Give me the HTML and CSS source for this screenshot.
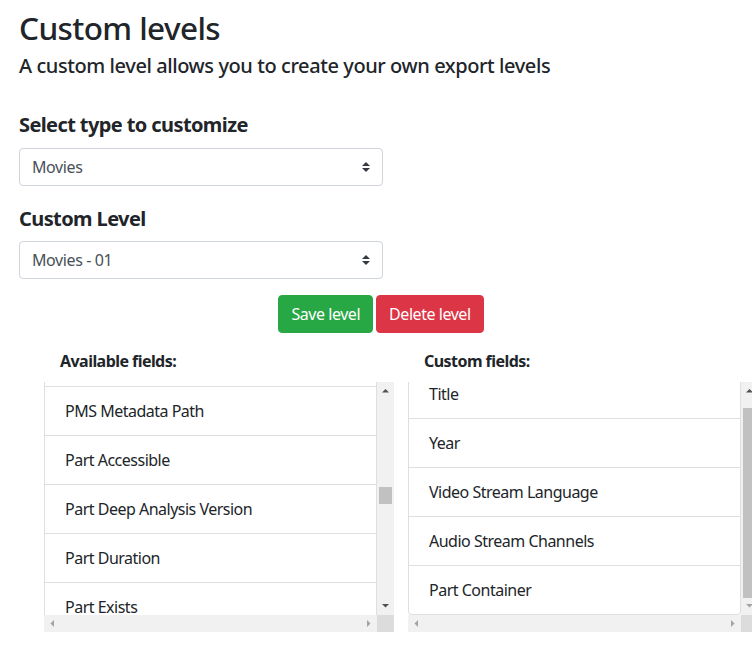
FILE: index.html
```html
<!DOCTYPE html>
<html lang="en">
<head>
<meta charset="utf-8">
<title>Custom levels</title>
<link rel="stylesheet" href="styles.css">
</head>
<body>
<div class="page">
  <h2 class="title">Custom levels</h2>
  <h5 class="subtitle">A custom level allows you to create your own export levels</h5>

  <label class="field-label" for="type">Select type to customize</label>
  <select class="custom-select" id="type"><option>Movies</option></select>

  <label class="field-label second" for="level">Custom Level</label>
  <select class="custom-select" id="level"><option>Movies - 01</option></select>

  <div class="actions">
    <button class="btn btn-save" type="button">Save level</button>
    <button class="btn btn-delete" type="button">Delete level</button>
  </div>

  <div class="lists">
    <div class="list-col">
      <div class="list-head">Available fields:</div>
      <div class="scrollbox">
        <div class="viewport" id="avail">
          <ul class="list-group">
            <li class="list-item">Added</li>
            <li class="list-item">Art</li>
            <li class="list-item">Audience Rating</li>
            <li class="list-item">Audience Rating Image</li>
            <li class="list-item">Audio Stream Bitrate</li>
            <li class="list-item">Audio Stream Codec</li>
            <li class="list-item">Audio Stream Language</li>
            <li class="list-item">Chapter Source</li>
            <li class="list-item">Collections</li>
            <li class="list-item">Content Rating</li>
            <li class="list-item">Countries</li>
            <li class="list-item">Directors</li>
            <li class="list-item">Duration</li>
            <li class="list-item">Edition</li>
            <li class="list-item">Genres</li>
            <li class="list-item">IMDB ID</li>
            <li class="list-item">Labels</li>
            <li class="list-item">Last Viewed</li>
            <li class="list-item">Locked Fields</li>
            <li class="list-item">Media Aspect Ratio</li>
            <li class="list-item">Media Bitrate</li>
            <li class="list-item">Media ID</li>
            <li class="list-item">Original Title</li>
            <li class="list-item">Originally Available</li>
            <li class="list-item">PMS Media Path</li>
            <li class="list-item" id="anchor">PMS Metadata Path</li>
            <li class="list-item">Part Accessible</li>
            <li class="list-item">Part Deep Analysis Version</li>
            <li class="list-item">Part Duration</li>
            <li class="list-item">Part Exists</li>
            <li class="list-item">Part File</li>
            <li class="list-item">Part File Combined</li>
            <li class="list-item">Part File Name</li>
            <li class="list-item">Part ID</li>
            <li class="list-item">Part Indexes</li>
            <li class="list-item">Part Optimized for Streaming</li>
            <li class="list-item">Part Size</li>
            <li class="list-item">Producers</li>
            <li class="list-item">Rating</li>
            <li class="list-item">Roles</li>
            <li class="list-item">Sort Title</li>
            <li class="list-item">Studio</li>
            <li class="list-item">Summary</li>
            <li class="list-item">Tagline</li>
            <li class="list-item">Thumbnail</li>
            <li class="list-item">Updated At</li>
            <li class="list-item">User Rating</li>
            <li class="list-item">Video Frame Rate</li>
            <li class="list-item">Video Resolution</li>
            <li class="list-item">Video Stream Bitrate</li>
            <li class="list-item">Video Stream Codec</li>
            <li class="list-item">Video Stream Height</li>
            <li class="list-item">Video Stream Width</li>
            <li class="list-item">View Count</li>
            <li class="list-item">View Offset</li>
            <li class="list-item">Writers</li>
          </ul>
        </div>
        <div class="vbar">
          <span class="sb-btn"><svg width="17" height="17" viewBox="0 0 17 17"><path class="arrow" d="M5 10.5h7L8.5 7z"/></svg></span>
          <div class="track"><div class="thumb" style="margin-top:88px;height:17px"></div></div>
          <span class="sb-btn"><svg width="17" height="17" viewBox="0 0 17 17"><path class="arrow" d="M5 6h7l-3.5 3.5z"/></svg></span>
        </div>
        <div class="hbar">
          <span class="sb-btn"><svg width="17" height="17" viewBox="0 0 17 17"><path class="arrow off" d="M10 5v7L6.5 8.5z"/></svg></span>
          <div class="track"></div>
          <span class="sb-btn"><svg width="17" height="17" viewBox="0 0 17 17"><path class="arrow off" d="M7 5v7l3.5-3.5z"/></svg></span>
        </div>
        <div class="corner"></div>
      </div>
    </div>
    <div class="list-col">
      <div class="list-head">Custom fields:</div>
      <div class="scrollbox">
        <div class="viewport" id="custom">
          <ul class="list-group">
            <li class="list-item">Title</li>
            <li class="list-item">Year</li>
            <li class="list-item">Video Stream Language</li>
            <li class="list-item">Audio Stream Channels</li>
            <li class="list-item">Part Container</li>
          </ul>
        </div>
        <div class="vbar">
          <span class="sb-btn"><svg width="17" height="17" viewBox="0 0 17 17"><path class="arrow" d="M5 10.5h7L8.5 7z"/></svg></span>
          <div class="track"><div class="thumb" style="margin-top:9px;height:190px"></div></div>
          <span class="sb-btn"><svg width="17" height="17" viewBox="0 0 17 17"><path class="arrow off" d="M5 6h7l-3.5 3.5z"/></svg></span>
        </div>
        <div class="hbar">
          <span class="sb-btn"><svg width="17" height="17" viewBox="0 0 17 17"><path class="arrow off" d="M10 5v7L6.5 8.5z"/></svg></span>
          <div class="track"></div>
          <span class="sb-btn"><svg width="17" height="17" viewBox="0 0 17 17"><path class="arrow off" d="M7 5v7l3.5-3.5z"/></svg></span>
        </div>
        <div class="corner"></div>
      </div>
    </div>
  </div>
</div>
<script src="script.js"></script>
</body>
</html>
```

FILE: styles.css
```css
html, body {
  margin: 0;
  padding: 0;
  overflow: hidden;
  background: #fff;
}

body {
  font-family: "Noto Sans", "Open Sans", "DejaVu Sans", sans-serif;
  color: #212529;
  font-size: 16px;
  line-height: 1.5;
}

.page {
  width: 724px;
  padding: 9px 19px 0 19px;
}

.title {
  margin: 0 0 7px 0;
  font-size: 31.5px;
  font-weight: 500;
  line-height: 38px;
  letter-spacing: -0.6px;
}

.subtitle {
  margin: 0;
  font-size: 20px;
  font-weight: 500;
  line-height: 24px;
  letter-spacing: -0.42px;
}

.field-label {
  display: block;
  margin: 35px 0 11px 0;
  font-size: 20px;
  font-weight: 700;
  line-height: 24px;
  letter-spacing: -0.6px;
}

.field-label.second {
  margin-top: 21px;
  margin-bottom: 10px;
}

.custom-select {
  display: block;
  width: 364px;
  height: 38px;
  margin: 0;
  padding: 6px 28px 6px 12px;
  font-family: inherit;
  font-size: 16px;
  line-height: 24px;
  color: #495057;
  background: #fff url("data:image/svg+xml;charset=utf8,%3Csvg xmlns='http://www.w3.org/2000/svg' width='4' height='5' viewBox='0 0 4 5'%3E%3Cpath fill='%23343a40' d='M2 0L0 2h4zm0 5L0 3h4z'/%3E%3C/svg%3E") no-repeat right 12px center;
  background-size: 8px 10px;
  border: 1px solid #ced4da;
  border-radius: 4px;
  -webkit-appearance: none;
  appearance: none;
  letter-spacing: -0.4px;
}

.actions {
  display: flex;
  justify-content: center;
  gap: 3px;
  margin-top: 16px;
}

.btn {
  height: 38px;
  padding: 6px 12px;
  font-family: inherit;
  font-size: 16px;
  line-height: 24px;
  color: #fff;
  border: 1px solid transparent;
  border-radius: 4px;
  letter-spacing: -0.45px;
}

.btn-save {
  background: #28a745;
  border-color: #28a745;
}

.btn-delete {
  background: #dc3545;
  border-color: #dc3545;
}

.lists {
  display: grid;
  grid-template-columns: 350px 350px;
  column-gap: 14px;
  padding-left: 25px;
  margin-top: 16px;
}

.list-head {
  padding-left: 16px;
  font-size: 16px;
  font-weight: 700;
  line-height: 24px;
  margin-bottom: 9px;
  letter-spacing: -0.55px;
}

/* scroll box with classic scrollbars */
.scrollbox {
  display: grid;
  grid-template-columns: 333px 17px;
  grid-template-rows: 233px 17px;
  width: 350px;
}

.viewport {
  position: relative;
  overflow: hidden;
}

.vbar {
  display: flex;
  flex-direction: column;
  background: #f1f1f1;
}

.hbar {
  display: flex;
  background: #f1f1f1;
}

.track {
  flex: 1;
  display: flex;
  flex-direction: column;
}

.thumb {
  margin-left: 2px;
  margin-right: 2px;
  background: #c1c1c1;
}

.sb-btn {
  display: block;
  width: 17px;
  height: 17px;
  flex: none;
}

.sb-btn svg {
  display: block;
}

.arrow {
  fill: #505050;
}

.arrow.off {
  fill: #a3a3a3;
}

.corner {
  background: #dcdcdc;
}

.list-group {
  list-style: none;
  margin: 0;
  padding: 0;
}

.list-item {
  padding: 12px 20px;
  line-height: 24px;
  border: 1px solid rgba(0, 0, 0, 0.125);
  margin-bottom: -1px;
  background: #fff;
  letter-spacing: -0.5px;
  white-space: nowrap;
}

.list-item:first-child {
  border-top-left-radius: 4px;
  border-top-right-radius: 4px;
}

.list-item:last-child {
  margin-bottom: 0;
  border-bottom-left-radius: 4px;
  border-bottom-right-radius: 4px;
}
```

FILE: script.js
```js
(function () {
  var avail = document.getElementById('avail');
  var anchor = document.getElementById('anchor');
  avail.scrollTop = anchor.offsetTop - 4;
  var custom = document.getElementById('custom');
  custom.scrollTop = custom.scrollHeight;
})();
```
